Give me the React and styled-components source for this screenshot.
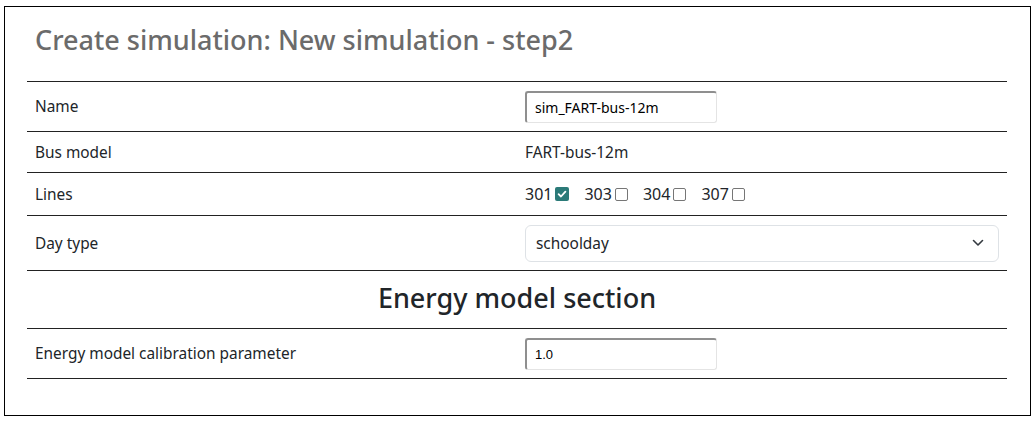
import React from "react";
import styled, { createGlobalStyle } from "styled-components";

const Global = createGlobalStyle`
  html, body { margin: 0; padding: 0; background: #fff; }
  body { font-family: "Noto Sans", "Open Sans", sans-serif; color: #212529; }
  * { box-sizing: border-box; }
`;

const Page = styled.div`
  padding: 6px 5px 0 4px;
`;

const Card = styled.div`
  border: 1px solid #000;
  width: 1027px;
  height: 410px;
  padding: 0 23px 0 22px;
`;

const Title = styled.h3`
  margin: 0;
  height: 74px;
  padding: 17px 0 0 8px;
  font-size: 27px;
  font-weight: 500;
  color: #6b6b6b;
  line-height: 1.2;
`;

const Table = styled.div`
  border-bottom: 1px solid #222;
`;

const Row = styled.div`
  display: grid;
  grid-template-columns: 490px 1fr;
  align-items: center;
  height: ${(p) => p.$h}px;
  border-top: 1px solid #222;
`;

const Cell = styled.div`
  padding: 0 8px;
  font-size: 15.4px;
  color: #212529;
`;

const SectionRow = styled.div`
  height: ${(p) => p.$h}px;
  border-top: 1px solid #222;
  display: flex;
  align-items: center;
  justify-content: center;
  padding-bottom: 5px;
`;

const SectionTitle = styled.h4`
  margin: 0;
  font-size: 27px;
  font-weight: 500;
  color: #212529;
`;

const TextInput = styled.input`
  width: 192px;
  height: 32px;
  border-style: solid;
  border-width: 2px 1.5px 1.5px 2px;
  border-color: #8f8f8f #e4e4e4 #e4e4e4 #8f8f8f;
  border-radius: 3px;
  padding: 0 8px;
  font-size: ${(p) => p.$fs || 13}px;
  font-family: ${(p) => (p.$sans ? '"Noto Sans", sans-serif' : '"Liberation Sans", Arial, sans-serif')};
  color: #000;
  outline: none;
`;

const Checks = styled.div`
  display: flex;
  align-items: center;
  gap: 15px;
`;

const CheckLabel = styled.label`
  display: flex;
  align-items: center;
  gap: 3px;
  font-size: 16px;
`;

const Box = styled.span`
  width: ${(p) => (p.$on ? 14 : 13)}px;
  height: ${(p) => (p.$on ? 14 : 13)}px;
  border-radius: 2px;
  display: inline-flex;
  align-items: center;
  justify-content: center;
  background: ${(p) => (p.$on ? "#2b7a78" : "#fff")};
  border: ${(p) => (p.$on ? "none" : "1.5px solid #767676")};
`;

const SelectBox = styled.div`
  height: 37px;
  border: 1px solid #dee2e6;
  border-radius: 6px;
  display: flex;
  align-items: center;
  justify-content: space-between;
  padding: 0 14px 0 10px;
  font-size: 15.4px;
  color: #212529;
`;

const Check = () => (
  <svg width="10" height="10" viewBox="0 0 10 10">
    <path d="M1.6 5.2 L4 7.5 L8.4 2.6" fill="none" stroke="#fff" strokeWidth="1.8" strokeLinecap="round" strokeLinejoin="round" />
  </svg>
);

const Chevron = () => (
  <svg width="12" height="8" viewBox="0 0 12 8">
    <path d="M1.5 1.5 L6 6 L10.5 1.5" fill="none" stroke="#343a40" strokeWidth="1.6" strokeLinecap="round" strokeLinejoin="round" />
  </svg>
);

const lines = [
  { n: "301", on: true },
  { n: "303", on: false },
  { n: "304", on: false },
  { n: "307", on: false },
];

export default function App() {
  return (
    <>
      <Global />
      <Page>
        <Card>
          <Title>Create simulation: New simulation - step2</Title>
          <Table>
            <Row $h={50}>
              <Cell>Name</Cell>
              <Cell>
                <TextInput $sans $fs={14} defaultValue="sim_FART-bus-12m" />
              </Cell>
            </Row>
            <Row $h={41}>
              <Cell>Bus model</Cell>
              <Cell>FART-bus-12m</Cell>
            </Row>
            <Row $h={43}>
              <Cell>Lines</Cell>
              <Cell>
                <Checks>
                  {lines.map((l) => (
                    <CheckLabel key={l.n}>
                      {l.n}
                      <Box $on={l.on}>{l.on && <Check />}</Box>
                    </CheckLabel>
                  ))}
                </Checks>
              </Cell>
            </Row>
            <Row $h={55}>
              <Cell>Day type</Cell>
              <Cell>
                <SelectBox>
                  <span>schoolday</span>
                  <Chevron />
                </SelectBox>
              </Cell>
            </Row>
            <SectionRow $h={58}>
              <SectionTitle>Energy model section</SectionTitle>
            </SectionRow>
            <Row $h={50}>
              <Cell>Energy model calibration parameter</Cell>
              <Cell>
                <TextInput defaultValue="1.0" />
              </Cell>
            </Row>
          </Table>
        </Card>
      </Page>
    </>
  );
}
